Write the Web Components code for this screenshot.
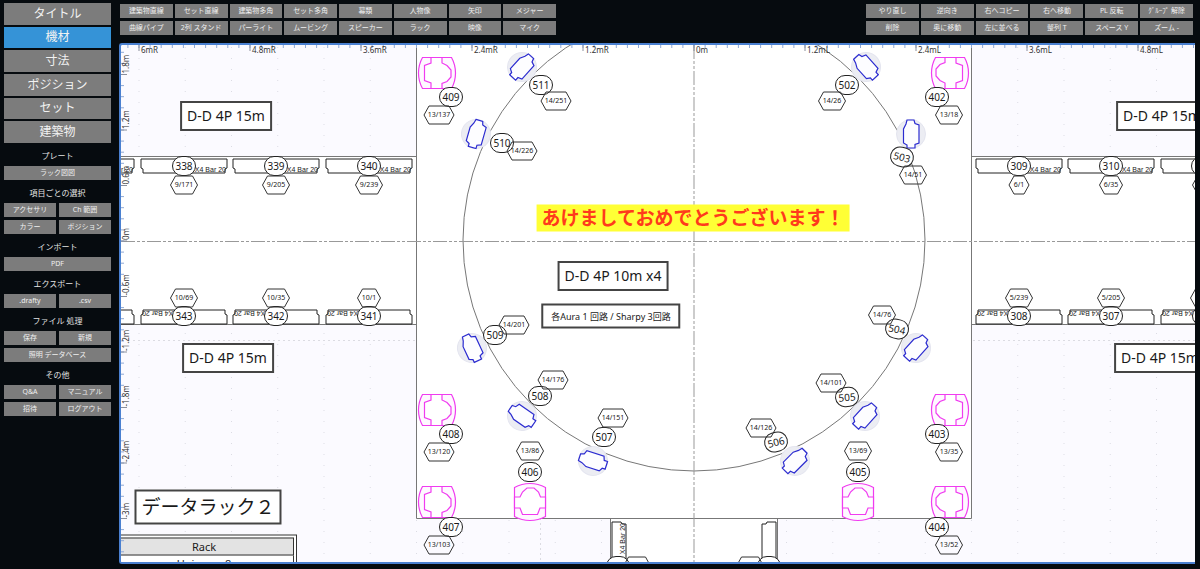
<!DOCTYPE html>
<html lang="ja">
<head>
<meta charset="utf-8">
<title>Lighting plot</title>
<style>
  html, body { height: 100%; margin: 0; }
  body {
    background: #060b0f;
    color: #eee;
    font-family: "Noto Sans", "Noto Sans CJK JP", sans-serif;
  }
</style>
</head>
<body>
<plot-app>
  <side-tabs slot="side"></side-tabs>
  <tool-section slot="side" heading="プレート">
    <tool-button wide>ラック図図</tool-button>
  </tool-section>
  <tool-section slot="side" heading="項目ごとの選択">
    <tool-button>アクセサリ</tool-button>
    <tool-button>Ch 範囲</tool-button>
    <tool-button>カラー</tool-button>
    <tool-button>ポジション</tool-button>
  </tool-section>
  <tool-section slot="side" heading="インポート">
    <tool-button wide>PDF</tool-button>
  </tool-section>
  <tool-section slot="side" heading="エクスポート">
    <tool-button>.drafty</tool-button>
    <tool-button>.csv</tool-button>
  </tool-section>
  <tool-section slot="side" heading="ファイル 処理">
    <tool-button>保存</tool-button>
    <tool-button>新規</tool-button>
    <tool-button wide>照明 データベース</tool-button>
  </tool-section>
  <tool-section slot="side" heading="その他">
    <tool-button>Q&amp;A</tool-button>
    <tool-button>マニュアル</tool-button>
    <tool-button>招待</tool-button>
    <tool-button>ログアウト</tool-button>
  </tool-section>

  <tool-group slot="tools" style="--cols: 8; --width: 436px">
    <tool-button>建築物直線</tool-button>
    <tool-button>セット直線</tool-button>
    <tool-button>建築物多角</tool-button>
    <tool-button>セット多角</tool-button>
    <tool-button>幕類</tool-button>
    <tool-button>人物像</tool-button>
    <tool-button>矢印</tool-button>
    <tool-button>メジャー</tool-button>
    <tool-button>曲線パイプ</tool-button>
    <tool-button>2列 スタンド</tool-button>
    <tool-button>パーライト</tool-button>
    <tool-button>ムービング</tool-button>
    <tool-button>スピーカー</tool-button>
    <tool-button>ラック</tool-button>
    <tool-button>映像</tool-button>
    <tool-button>マイク</tool-button>
  </tool-group>
  <tool-group slot="tools" style="--cols: 6; --width: 327px">
    <tool-button>やり直し</tool-button>
    <tool-button>逆向き</tool-button>
    <tool-button>右へコピー</tool-button>
    <tool-button>右へ移動</tool-button>
    <tool-button>PL 反転</tool-button>
    <tool-button>ｸﾞﾙｰﾌﾟ 解除</tool-button>
    <tool-button>削除</tool-button>
    <tool-button>奥に移動</tool-button>
    <tool-button>左に並べる</tool-button>
    <tool-button>整列 T</tool-button>
    <tool-button>スペース Y</tool-button>
    <tool-button>ズーム -</tool-button>
  </tool-group>

  <plot-canvas></plot-canvas>
</plot-app>

<script>
class PlotApp extends HTMLElement {
  constructor() {
    super();
    this.attachShadow({ mode: 'open' });
    this.shadowRoot.innerHTML = `
      <style>
        :host {
          display: grid;
          grid-template-columns: 119px minmax(0, 1fr);
          min-height: 100vh;
          box-sizing: border-box;
          padding: 0 5px 5px 0;
        }
        nav { padding: 3px 8px 0 4px; }
        main { display: flex; flex-direction: column; min-width: 0; }
        header {
          display: flex;
          justify-content: space-between;
          padding: 4px 2px 8px 1px;
        }
        ::slotted(plot-canvas) { flex: 1; }
      </style>
      <nav><slot name="side"></slot></nav>
      <main>
        <header><slot name="tools"></slot></header>
        <slot></slot>
      </main>
    `;
  }
}

class SideTabs extends HTMLElement {
  constructor() {
    super();
    this.attachShadow({ mode: 'open' });
    this._tabs = ['タイトル', '機材', '寸法', 'ポジション', 'セット', '建築物'];
    this._active = '機材';
  }

  connectedCallback() {
    this.render();
    this.shadowRoot.addEventListener('click', (e) => {
      const button = e.target.closest('button');
      if (!button) return;
      this._active = button.textContent;
      this.render();
    });
  }

  render() {
    this.shadowRoot.innerHTML = `
      <style>
        :host { display: grid; grid-auto-rows: 1fr; gap: 2px; height: 140px; }
        button {
          border: 0;
          padding: 0;
          background: #7c7c7c;
          color: #f2f2f2;
          font: 12px/16px "Noto Sans", "Noto Sans CJK JP", sans-serif;
        }
        button[aria-pressed="true"] { background: #3593d7; }
      </style>
      ${this._tabs
        .map((t) => `<button type="button" aria-pressed="${t === this._active}">${t}</button>`)
        .join('')}
    `;
  }
}

class ToolButton extends HTMLElement {
  constructor() {
    super();
    this.attachShadow({ mode: 'open' });
    this.shadowRoot.innerHTML = `
      <style>
        :host { display: block; min-width: 0; }
        :host([wide]) { grid-column: 1 / -1; }
        button {
          display: block;
          width: 100%;
          height: 14px;
          border: 0;
          padding: 0;
          background: #7c7c7c;
          color: #f0f0f0;
          font: 7px/14px "Noto Sans", "Noto Sans CJK JP", sans-serif;
          white-space: nowrap;
        }
        button:hover { background: #8c8c8c; }
      </style>
      <button type="button"><slot></slot></button>
    `;
  }
}

class ToolSection extends HTMLElement {
  constructor() {
    super();
    this.attachShadow({ mode: 'open' });
  }

  connectedCallback() {
    this.shadowRoot.innerHTML = `
      <style>
        :host { display: block; }
        h2 {
          margin: 0;
          padding: 4px 0 1px;
          font-size: 8px;
          line-height: 18px;
          font-weight: 400;
          text-align: center;
          color: #e4e4e4;
        }
        div { display: grid; grid-template-columns: 1fr 1fr; gap: 3px; }
      </style>
      <h2>${this.getAttribute('heading')}</h2>
      <div><slot></slot></div>
    `;
  }
}

class ToolGroup extends HTMLElement {
  constructor() {
    super();
    this.attachShadow({ mode: 'open' });
    this.shadowRoot.innerHTML = `
      <style>
        :host {
          display: grid;
          grid-template-columns: repeat(var(--cols), minmax(0, 1fr));
          gap: 3px 2px;
          width: var(--width);
        }
      </style>
      <slot></slot>
    `;
  }
}

// everything that sits on the sheet is centred on its x / y
class PlotItem extends HTMLElement {
  constructor() {
    super();
    this.attachShadow({ mode: 'open' });
  }

  connectedCallback() {
    this.render();
  }

  get label() {
    return this.getAttribute('label') || '';
  }

  get base() {
    const angle = this.getAttribute('angle') || 0;
    return `
      :host {
        position: absolute;
        left: ${this.getAttribute('x')}px;
        top: ${this.getAttribute('y')}px;
        transform: translate(-50%, -50%) rotate(${angle}deg);
        color: #1a1a1a;
        white-space: nowrap;
      }
      svg { display: block; overflow: visible; fill: none; }
    `;
  }
}

class PlotChannel extends PlotItem {
  render() {
    this.shadowRoot.innerHTML = `
      <style>
        ${this.base}
        span {
          display: block;
          box-sizing: border-box;
          width: 24px;
          height: 20px;
          border: 1px solid #222;
          border-radius: 10px;
          background: #fff;
          font-size: 10px;
          line-height: 18px;
          text-align: center;
        }
      </style>
      <span>${this.label}</span>
    `;
  }
}

class PlotAddress extends PlotItem {
  render() {
    const widths = { 3: 20, 4: 23, 5: 27, 6: 30 };
    const w = widths[this.label.length] || 27;
    this.shadowRoot.innerHTML = `
      <style>
        ${this.base}
        div { display: grid; width: ${w}px; height: 18px; }
        svg, span { grid-area: 1 / 1; }
        span { font-size: 7px; line-height: 18px; text-align: center; }
      </style>
      <div>
        <svg width="${w}" height="18" stroke="#333">
          <path d="M0 9L5 0H${w - 5}L${w} 9L${w - 5} 18H5Z"/>
        </svg>
        <span>${this.label}</span>
      </div>
    `;
  }
}

class PlotNote extends PlotItem {
  render() {
    this.shadowRoot.innerHTML = `
      <style>
        ${this.base}
        div {
          border: 2px solid #444;
          padding: 3px 5px;
          background: #fff;
          font-size: 14px;
          line-height: 20px;
        }
        .small { font-size: 9px; line-height: 15px; padding: 3px 8px; }
        .large { font-size: 19px; line-height: 25px; padding: 3px 5px; }
        .banner {
          border: 0;
          padding: 1px 5px;
          background: #ffff35;
          color: #ff3a1c;
          font-size: 19px;
          line-height: 25px;
          font-weight: 700;
        }
      </style>
      <div class="${this.getAttribute('kind') || ''}">${this.label}</div>
    `;
  }
}

class PlotBar extends PlotItem {
  render() {
    this.shadowRoot.innerHTML = `
      <style>
        ${this.base}
        text { font: 7px "Liberation Sans", sans-serif; fill: #222; }
      </style>
      <svg width="86" height="14" stroke="#222">
        <path fill="#fff" d="M0 0H86V9L84 10V14H2V10L0 9Z"/>
        <text x="85" y="13" text-anchor="end" stroke="none">${this.label}</text>
      </svg>
    `;
  }
}

class PlotSpot extends PlotItem {
  render() {
    this.shadowRoot.innerHTML = `
      <style>${this.base}</style>
      <svg width="30" height="30" viewBox="-15 -15 30 30">
        <circle r="14.500" fill="#ecedf3" stroke="#e4e5ef"/>
        <path fill="#fdfdff" stroke="#2b2bd0" stroke-width="1.200"
          d="M-4 -14H3L4 -10.500L8 -9V9L4 10.500V14H-4V11L-7.500 9V-5L-5 -10Z"/>
      </svg>
    `;
  }
}

class PlotWash extends PlotItem {
  render() {
    this.shadowRoot.innerHTML = `
      <style>${this.base}</style>
      <svg width="38" height="32" viewBox="-19 -16 38 32" stroke="#f03cf0" stroke-width="1.200">
        <path fill="#fef8ff" d="M-14.500 -15.500H14.500A32 32 0 0 1 14.500 15.500H-14.500A32 32 0 0 1 -14.500 -15.500Z"/>
        <path fill="#fff" d="M-6 -15.500V-10L-12.500 -7.500V7.500L-6 10V15.500H5V10.500L10 8.500L14 4V-3L10 -7.500L5 -10V-15.500Z"/>
      </svg>
    `;
  }
}

class PlotRack extends PlotItem {
  render() {
    this.shadowRoot.innerHTML = `
      <style>
        ${this.base}
        table {
          width: 186px;
          border: 1px solid #333;
          padding: 2px;
          border-spacing: 0;
          background: #fff;
          font-size: 11px;
          line-height: 16px;
        }
        th, td { border: 1px solid #333; padding: 0; font-weight: 400; text-align: center; }
        th { background: #e3e3e3; }
        td { border-top: 0; }
      </style>
      <table>
        <thead><tr><th>Rack</th></tr></thead>
        <tbody><tr><td>Universe 8</td></tr></tbody>
      </table>
    `;
  }
}

const CHANNELS = [
  [409, 451, 97], [511, 541, 85], [510, 502, 143], [402, 937, 97], [502, 847, 85],
  [503, 902, 157, 15], [338, 184, 166], [339, 276, 166], [340, 369, 166],
  [309, 1019, 166], [310, 1111, 166], ['', 1203, 166],
  [343, 184, 316], [342, 276, 316], [341, 369, 316],
  [308, 1019, 316], [307, 1111, 316], ['', 1204, 316],
  [509, 495, 335], [508, 540, 396], [507, 604, 437], [406, 530, 472],
  [408, 451, 434], [407, 451, 527], [504, 897, 329, 12], [505, 847, 397, -5],
  [506, 776, 442, -15], [405, 858, 472], [403, 937, 434], [404, 937, 527],
  ['', 618, 566], ['', 769, 566],
];

const ADDRESSES = [
  ['9/171', 184, 185], ['9/205', 276, 185], ['9/239', 369, 185],
  ['6/1', 1019, 185], ['6/35', 1111, 185], ['', 1206, 185],
  ['10/69', 184, 298], ['10/35', 276, 298], ['10/1', 369, 298],
  ['5/239', 1019, 298], ['5/205', 1111, 298], ['', 1204, 298],
  ['13/137', 439, 115], ['14/251', 556, 101], ['14/226', 522, 151],
  ['13/18', 949, 115], ['14/26', 832, 101], ['14/51', 913, 175],
  ['14/201', 514, 325], ['14/176', 553, 380], ['14/151', 613, 418],
  ['13/86', 530, 451], ['13/120', 439, 452], ['13/103', 439, 545],
  ['14/76', 882, 315], ['14/101', 831, 383], ['14/126', 761, 428],
  ['13/69', 858, 451], ['13/35', 949, 452], ['13/52', 949, 545],
  ['', 637, 566], ['', 750, 566],
];

const SPOTS = [
  [522, 67, 42], [476, 134, 16], [866, 67, -42], [911, 134, 0], [472, 348, -25],
  [522, 416, -55], [593, 461, -72], [795, 461, 45], [865, 416, 42], [916, 348, 42],
];

const WASHES = [
  [437, 73, 0], [437, 410, 0], [437, 502, 0], [530, 502, -90],
  [858, 502, -90], [950, 502, 180], [950, 410, 180], [950, 73, 180],
];

const BARS = [
  [91, 166, 0], [184, 166, 0], [276, 166, 0], [369, 166, 0],
  [1019, 166, 0], [1111, 166, 0], [1204, 166, 0],
  [91, 317, 180], [184, 317, 180], [276, 317, 180], [369, 317, 180],
  [1019, 317, 180], [1111, 317, 180], [1204, 317, 180],
  [619, 565, -90], [769, 565, 90],
];

const NOTES = [
  ['D-D 4P 15m', 226, 116], ['D-D 4P 15m', 228, 358],
  ['D-D 4P 15m', 1162, 116], ['D-D 4P 15m', 1160, 358],
  ['D-D 4P 10m x4', 613, 276],
  ['各Aura 1 回路 / Sharpy 3回路', 611, 316, 'small'],
  ['データラック２', 208, 507, 'large'],
  ['あけましておめでとうございます！', 693, 218, 'banner'],
];

// sheet coordinates of the visible top left corner, the 0m crossing, and 1.2m in pixels
const VIEW = { x: 121, y: 45 };
const ZERO = { x: 694, y: 241 };
const STEP = 111;

class PlotCanvas extends HTMLElement {
  constructor() {
    super();
    this.attachShadow({ mode: 'open' });
  }

  connectedCallback() {
    this.render();
  }

  _item(tag, x, y, angle = 0, label = '', kind = '') {
    return `<${tag} x="${x - VIEW.x}" y="${y - VIEW.y}" angle="${angle}" label="${label}" kind="${kind}"></${tag}>`;
  }

  _rulers() {
    let minor = '';
    let major = '';
    let labels = '';
    for (let i = -51; i < 60; i++) {
      minor += `M${ZERO.x + (i * STEP) / 10} 45v3`;
    }
    for (let i = -17; i < 30; i++) {
      minor += `M121 ${ZERO.y + (i * STEP) / 10}h3`;
    }
    for (let i = -5; i <= 5; i++) {
      const x = ZERO.x + i * STEP;
      const metres = Number((Math.abs(i) * 1.2).toFixed(1));
      const side = i < 0 ? 'R' : i > 0 ? 'L' : '';
      major += `M${x} 45v6`;
      labels += `<text x="${x + 2}" y="53">${metres}m${side}</text>`;
    }
    for (let i = -3; i <= 5; i++) {
      const y = ZERO.y + (i * STEP) / 2;
      const metres = Number((-i * 0.6).toFixed(1)) || 0;
      major += `M121 ${y}h6`;
      labels += `<text transform="translate(129 ${y - 1}) rotate(-90)">${metres}m</text>`;
    }
    return `
      <path d="${minor}" stroke="#8fa9d6"/>
      <path d="${major}" stroke="#8a8f9c"/>
      <g class="ruler">${labels}</g>
    `;
  }

  render() {
    this.shadowRoot.innerHTML = `
      <style>
        :host {
          display: block;
          position: relative;
          overflow: hidden;
          border: 2px solid #4a80d0;
          border-right: 0;
          border-radius: 3px 0 0 3px;
          background: #fbfaff;
          color: #222;
        }
        .sheet { position: absolute; left: 0; top: 0; width: 100%; height: 100%; fill: none; }
        .ruler text { font-size: 8px; fill: #333; }
      </style>
      <svg class="sheet">
        <defs>
          <pattern id="dots" width="46.250" height="11" x="138.500" y="3" patternUnits="userSpaceOnUse">
            <rect width="1" height="1" fill="#dcdce4"/>
          </pattern>
        </defs>
        <g transform="translate(${-VIEW.x} ${-VIEW.y})">
          <rect x="121" y="45" width="3000" height="2000" fill="url(#dots)"/>
          <path d="M133 340.500H3000M540.500 518V2000" stroke="#dcdce2" stroke-dasharray="2 3"/>
          <path fill="#fff" stroke="#777" d="M100 156.500H416.500V20H971.500V156.500H3000V324.500H971.500V518.500H777.500V2000H610.500V518.500H416.500V324.500H100Z"/>
          <path stroke="#777" d="M416.500 156V325M971.500 156V325M610 518.500H778"/>
          <circle cx="694" cy="240" r="231" stroke="#777"/>
          <path stroke="#999" stroke-dasharray="14 2 3 2 3 2" d="M121 241.500H3000M694 45V2000"/>
        </g>
      </svg>
      ${WASHES.map(([x, y, a]) => this._item('plot-wash', x, y, a)).join('')}
      ${SPOTS.map(([x, y, a]) => this._item('plot-spot', x, y, a)).join('')}
      ${BARS.map(([x, y, a]) => this._item('plot-bar', x, y, a, a === 90 ? '' : 'X4 Bar 20')).join('')}
      ${CHANNELS.map(([t, x, y, a]) => this._item('plot-channel', x, y, a, t)).join('')}
      ${ADDRESSES.map(([t, x, y]) => this._item('plot-address', x, y, 0, t)).join('')}
      ${NOTES.map(([t, x, y, kind]) => this._item('plot-note', x, y, 0, t, kind)).join('')}
      ${this._item('plot-rack', 204, 555)}
      <svg class="sheet">
        <g transform="translate(${-VIEW.x} ${-VIEW.y})">${this._rulers()}</g>
      </svg>
    `;
  }
}

customElements.define('plot-app', PlotApp);
customElements.define('side-tabs', SideTabs);
customElements.define('tool-button', ToolButton);
customElements.define('tool-section', ToolSection);
customElements.define('tool-group', ToolGroup);
customElements.define('plot-channel', PlotChannel);
customElements.define('plot-address', PlotAddress);
customElements.define('plot-note', PlotNote);
customElements.define('plot-bar', PlotBar);
customElements.define('plot-spot', PlotSpot);
customElements.define('plot-wash', PlotWash);
customElements.define('plot-rack', PlotRack);
customElements.define('plot-canvas', PlotCanvas);
</script>
</body>
</html>
